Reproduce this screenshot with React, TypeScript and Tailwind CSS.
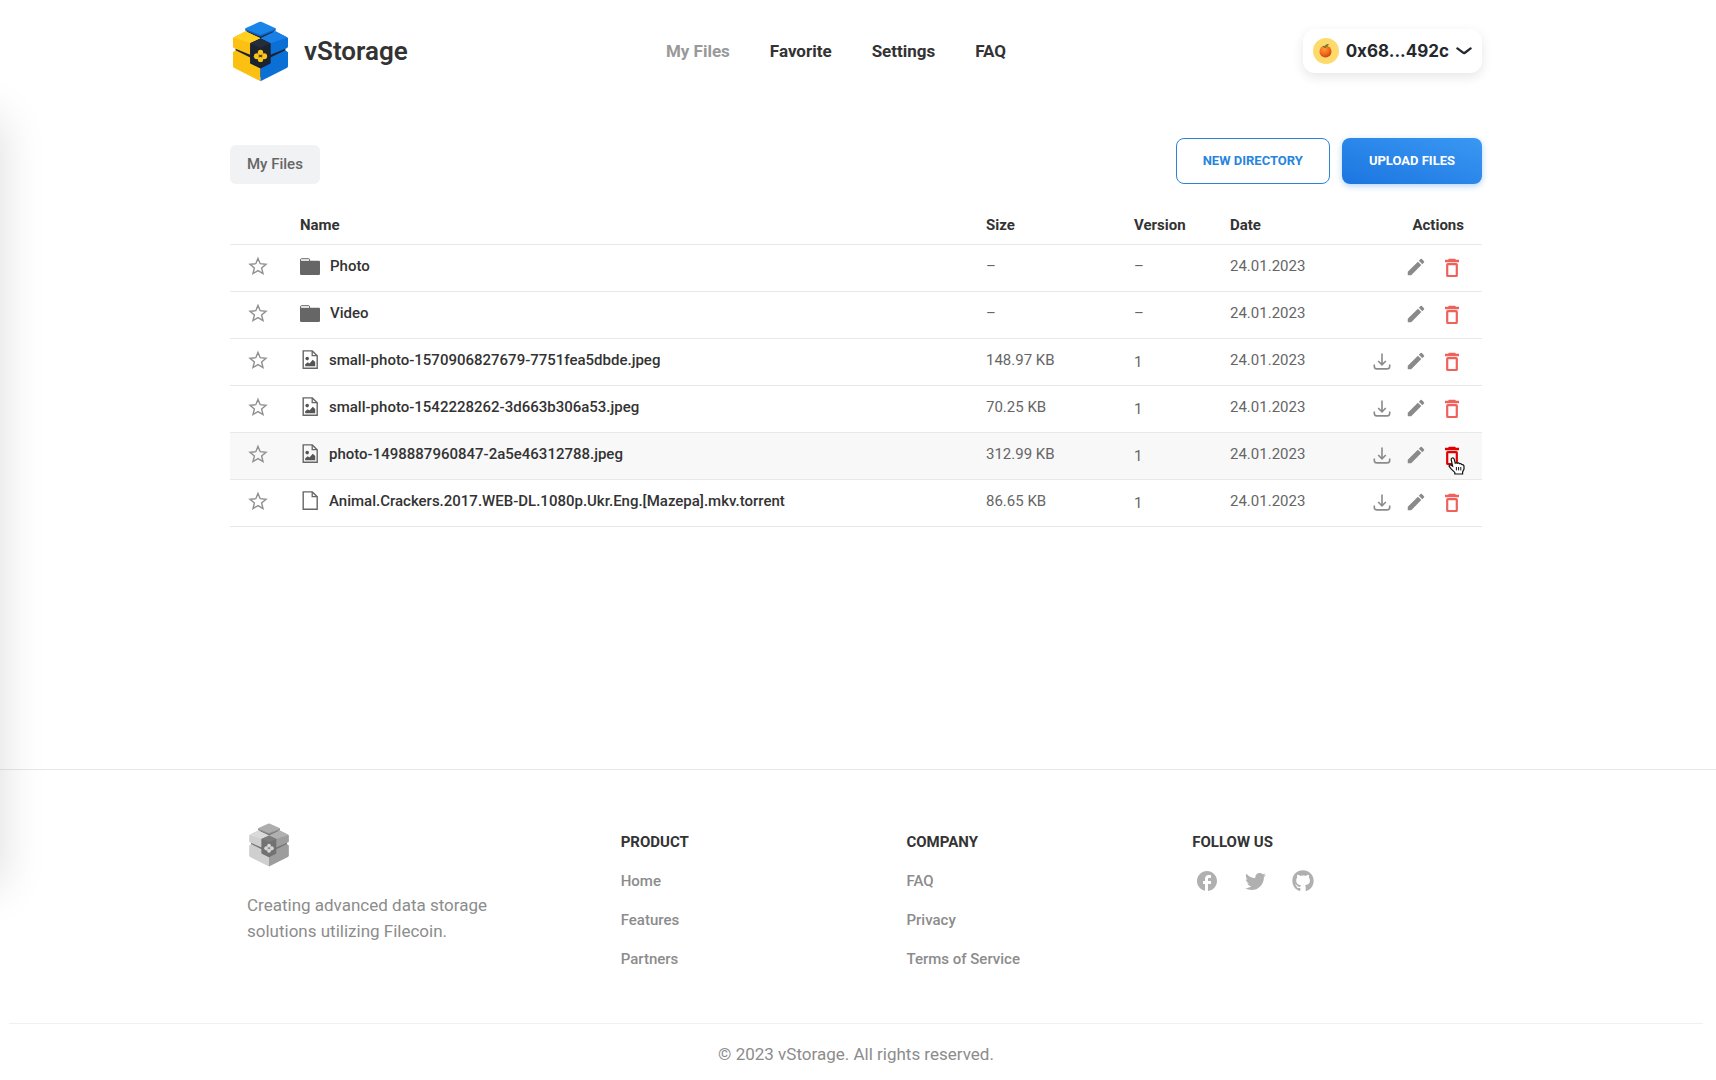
import { MdEdit, MdFacebook } from "react-icons/md";
import { FaGithub, FaTwitter } from "react-icons/fa";

type FileKind = "folder" | "image" | "file";

type FileRow = {
  name: string;
  kind: FileKind;
  size: string;
  version: string;
  date: string;
  active?: boolean;
};

const files: FileRow[] = [
  { name: "Photo", kind: "folder", size: "–", version: "–", date: "24.01.2023" },
  { name: "Video", kind: "folder", size: "–", version: "–", date: "24.01.2023" },
  { name: "small-photo-1570906827679-7751fea5dbde.jpeg", kind: "image", size: "148.97 KB", version: "1", date: "24.01.2023" },
  { name: "small-photo-1542228262-3d663b306a53.jpeg", kind: "image", size: "70.25 KB", version: "1", date: "24.01.2023" },
  { name: "photo-1498887960847-2a5e46312788.jpeg", kind: "image", size: "312.99 KB", version: "1", date: "24.01.2023", active: true },
  { name: "Animal.Crackers.2017.WEB-DL.1080p.Ukr.Eng.[Mazepa].mkv.torrent", kind: "file", size: "86.65 KB", version: "1", date: "24.01.2023" },
];

const navLinks = ["My Files", "Favorite", "Settings", "FAQ"];

const footerColumns = [
  { title: "PRODUCT", links: ["Home", "Features", "Partners"] },
  { title: "COMPANY", links: ["FAQ", "Privacy", "Terms of Service"] },
];

const colorPalette = {
  lid: "#1a84e8",
  lidEdge: "#0c62bd",
  leftTop: "#ffd021",
  left: "#fcc012",
  rightTop: "#1a80e6",
  right: "#0b70d6",
  core: "#1b2330",
  coreTop: "#252d3a",
  flower: "#fcc419",
};

const grayPalette = {
  lid: "#adadad",
  lidEdge: "#8f8f8f",
  leftTop: "#dadada",
  left: "#cfcfcf",
  rightTop: "#b0b0b0",
  right: "#9d9d9d",
  core: "#727272",
  coreTop: "#7c7c7c",
  flower: "#d8d8d8",
};

const Logo = ({ palette, className }: { palette: typeof colorPalette; className: string }) => (
  <svg viewBox="36 31 170 184" className={className} aria-hidden="true">
    <path d="M46 78 121 44 196 78V166L121 200 46 166Z" fill={palette.core} />
    {/* lower half */}
    <path d="M38 125 46 119 90 141V159L121 174V213L42 173Q38 171 38 167Z" fill={palette.left} />
    <path d="M204 125 196 119 151 141V159L121 174V213L200 173Q204 171 204 167Z" fill={palette.right} />
    {/* upper half */}
    <path d="M38 82 76 62 121 83 90 98V133L42 113Q38 111 38 107Z" fill={palette.left} />
    <path d="M39 81 76 62 121 83 90 98Z" fill={palette.leftTop} />
    <path d="M204 82 166 62 121 83 151 98V133L200 113Q204 111 204 107Z" fill={palette.right} />
    <path d="M203 81 166 62 121 83 151 98Z" fill={palette.rightTop} />
    {/* lid */}
    <path d="M75 54H167V60L125 77Q121 79 117 77L75 60Z" fill={palette.lidEdge} />
    <path d="M77 52 117 34Q121 32 125 34L165 52Q169 54 165 56L125 72Q121 74 117 72L77 56Q73 54 77 52Z" fill={palette.lid} />
    {/* core */}
    <path d="M90 98 121 84 151 98V158L121 173 90 158Z" fill={palette.core} />
    <path d="M90 98 121 84 151 98 121 112Z" fill={palette.coreTop} />
    <g fill={palette.flower}>
      <circle cx="121" cy="126" r="8" />
      <circle cx="110" cy="137" r="9" />
      <circle cx="132" cy="137" r="9" />
      <circle cx="121" cy="147" r="8" />
    </g>
    <path d="M117 132v9M125 132v9M117 137h8" stroke={palette.core} strokeWidth="2" fill="none" />
  </svg>
);

const Tangerine = () => (
  <svg viewBox="0 0 26 26" className="size-[26px]" aria-hidden="true">
    <defs>
      <radialGradient id="peel" cx="0.4" cy="0.3" r="0.75">
        <stop offset="0" stopColor="#ff9a3c" />
        <stop offset="0.55" stopColor="#f26a1b" />
        <stop offset="1" stopColor="#c93a0c" />
      </radialGradient>
    </defs>
    <circle cx="13" cy="13" r="13" fill="#fdda6b" />
    <circle cx="12.5" cy="13.6" r="6" fill="url(#peel)" />
    <path d="M11.5 8.8Q12.5 5.4 16 6.2Q15 9 11.5 8.8Z" fill="#5f8a2b" />
    <path d="M9.8 8.2 12 9.4 13.4 8.6" stroke="#4c6b22" strokeWidth="1" fill="none" />
  </svg>
);

const StarIcon = () => (
  <svg viewBox="0 0 20 20" className="size-5" fill="none" stroke="#8f8f8f" strokeWidth="1.4" strokeLinejoin="miter" aria-hidden="true">
    <path d="M10 2.4 12.2 7.7 18 8.2 13.6 11.9 15 17.6 10 14.6 5 17.6 6.4 11.9 2 8.2 7.8 7.7Z" />
  </svg>
);

const DownloadIcon = () => (
  <svg viewBox="0 0 18 18" className="size-[18px]" fill="none" stroke="currentColor" strokeWidth="1.6" aria-hidden="true">
    <path d="M9 .6V11.6M5.2 8 9 11.8 12.8 8" />
    <path d="M1.3 11.4V13.2Q1.3 15.9 4 15.9H14Q16.7 15.9 16.7 13.2V11.4" />
  </svg>
);

const TrashIcon = () => (
  <svg viewBox="0 0 24 24" className="size-6" aria-hidden="true">
    <path d="M9 2.8H15L16 3.8H19V6.2H5V3.8H8Z" fill="currentColor" />
    <rect x="7.2" y="8.2" width="9.6" height="11.8" rx="0.6" fill="none" stroke="currentColor" strokeWidth="2.2" />
  </svg>
);

const KindIcon = ({ kind }: { kind: FileKind }) => {
  if (kind === "folder") {
    return (
      <svg viewBox="0 0 20 18" className="h-[18px] w-5" aria-hidden="true">
        <path d="M.5 3.5V1.8Q.5.7 1.6.7H8.8Q9.6.7 9.6 1.8V3.4" fill="#f4f4f4" stroke="#666" />
        <path d="M0 2.8H19Q20 2.8 20 3.8V15.8Q20 17 18.8 17H1.2Q0 17 0 15.8Z" fill="#666" />
        <path d="M1.3 1.5H8.8V2.8H1.3Z" fill="#e4e4e4" />
      </svg>
    );
  }
  return (
    <svg viewBox="0 0 18 20" className="h-5 w-[18px]" aria-hidden="true">
      <path d="M2.2 .9H11.3L16.2 5.7V18.3H2.2Z" fill="none" stroke="#666" strokeWidth="1.4" />
      <path d="M11.2 .9V5.7H16.2" fill="none" stroke="#666" strokeWidth="1.3" />
      {kind === "image" && (
        <g fill="#555">
          <circle cx="6.2" cy="8.6" r="1.8" />
          <path d="M4.2 16.2V14.2L6.8 12.2 8.4 13.4 11.8 9.8 14.2 12V16.2Z" />
        </g>
      )}
    </svg>
  );
};

const HandCursor = () => (
  <svg viewBox="0 0 17 18" className="pointer-events-none absolute top-[13px] left-2 z-10 h-[18px] w-[17px]" aria-hidden="true">
    <path
      d="M4.3 1Q5.8.8 6.2 2.2L7.2 6.2Q8 5.4 9.3 6.2Q10.6 5.4 11.6 6.7Q13.4 6.2 14 7.7Q15.8 7.4 16 9.4V12L14.6 15V17H6.8V15.4L3.4 12.2 1.2 9.5Q.8 7.8 2.8 8L4.6 9.2 3.2 2.6Q3 1.3 4.3 1Z"
      fill="#fff"
      stroke="#111"
      strokeWidth="1.2"
    />
    <path d="M8.4 10V13.4M10.6 10V13.4M12.8 10V13.4" stroke="#111" fill="none" />
  </svg>
);

const FileTableRow = ({ file }: { file: FileRow }) => (
  <tr className={file.active ? "h-[47px] border-b border-[#e8e8e8] bg-[#f8f8f8]" : "h-[47px] border-b border-[#e8e8e8]"}>
    <td className="pb-[3px] pl-[18px]">
      <button type="button" aria-label={`Add ${file.name} to favorites`} className="block">
        <StarIcon />
      </button>
    </td>
    <td className="px-4">
      <div className="flex items-center gap-[10px] pb-[2px] font-medium text-[#333]">
        {file.kind === "folder" ? (
          <KindIcon kind={file.kind} />
        ) : (
          <span className="ml-px pb-[2px]">
            <KindIcon kind={file.kind} />
          </span>
        )}
        <a href="#" className="truncate">{file.name}</a>
      </div>
    </td>
    <td className="px-4 pb-[2px]">{file.size}</td>
    <td className={file.version === "1" ? "px-4 pt-[2px]" : "px-4 pb-[2px]"}>{file.version}</td>
    <td className="px-4 pb-[2px]">{file.date}</td>
    <td className="pr-[18px]">
      <div className="flex items-center justify-end gap-[13px] text-[#8a8a8a]">
        {file.kind !== "folder" && (
          <button type="button" aria-label={`Download ${file.name}`} className="mr-px">
            <DownloadIcon />
          </button>
        )}
        <button type="button" aria-label={`Rename ${file.name}`} className="pb-[2px]">
          <MdEdit className="size-[22px]" />
        </button>
        <button
          type="button"
          aria-label={`Delete ${file.name}`}
          className={file.active ? "relative text-[#e00000]" : "relative text-[#ef625c]"}
        >
          <TrashIcon />
          {file.active && <HandCursor />}
        </button>
      </div>
    </td>
  </tr>
);

const Header = () => (
  <header className="pr-1">
    <div className="mx-auto grid h-[102px] max-w-[1252px] grid-cols-[1fr_auto_1fr] items-center">
      <a href="#" className="flex items-center gap-[15px] pl-0.5 text-[#333]">
        <Logo palette={colorPalette} className="h-[61px] w-[57px]" />
        <span className="text-[26px] font-semibold">vStorage</span>
      </a>
      <nav className="flex gap-10 pt-0.5 pr-10 text-[17px] font-bold text-[#333]">
        {navLinks.map((label, idx) => (
          <a key={label} href="#" className={idx === 0 ? "text-[#999]" : ""}>
            {label}
          </a>
        ))}
      </nav>
      <button
        type="button"
        className="flex h-11 items-center gap-[7px] justify-self-end rounded-xl bg-white px-[10px] font-['Inter',sans-serif] text-[17px] font-bold text-[#25292e] shadow-[0_4px_12px_rgba(0,0,0,0.1)]"
      >
        <Tangerine />
        <span className="pt-0.5">0x68...492c</span>
        <svg viewBox="0 0 14 7" className="h-2 w-4" fill="none" stroke="currentColor" strokeWidth="2" strokeLinecap="round" strokeLinejoin="round" aria-hidden="true">
          <path d="M1.2 1.2 6.2 5Q7 5.6 7.8 5L12.8 1.2" />
        </svg>
      </button>
    </div>
  </header>
);

const Footer = () => (
  <footer className="border-t border-[#e8e8e8] pr-1">
    <div className="mx-auto grid max-w-[1252px] grid-cols-[374fr_286fr_286fr_286fr] pt-[53px] pr-1 pb-[53px] pl-[17px]">
      <div className="text-[#8c8c8c]">
        <Logo palette={grayPalette} className="ml-px h-[44px] w-[42px]" />
        <p className="mt-[25px] max-w-[270px] text-[17px] leading-[26px]">
          Creating advanced data storage solutions utilizing Filecoin.
        </p>
      </div>
      {footerColumns.map((column) => (
        <div key={column.title} className="pt-[9px] leading-[21px]">
          <h2 className="font-bold text-[#333]">{column.title}</h2>
          <ul className="mt-[18px] flex flex-col gap-[18px] font-medium text-[#8c8c8c]">
            {column.links.map((link) => (
              <li key={link}>
                <a href="#">{link}</a>
              </li>
            ))}
          </ul>
        </div>
      ))}
      <div className="pt-[9px] leading-[21px]">
        <h2 className="font-bold text-[#333]">FOLLOW US</h2>
        <div className="mt-[16px] flex gap-6 pl-[3px] text-[#b0b0b0]">
          <a href="#" aria-label="Facebook">
            <MdFacebook className="size-6" />
          </a>
          <a href="#" aria-label="Twitter" className="flex size-6 items-center justify-center">
            <FaTwitter className="size-[21px]" />
          </a>
          <a href="#" aria-label="GitHub" className="flex size-6 items-center justify-center">
            <FaGithub className="size-[22px]" />
          </a>
        </div>
      </div>
    </div>
    <div className="mx-[9px] border-t border-[#f0f0f0] pt-[17px] pb-[13px] text-center text-[17px] leading-[26px] text-[#8c8c8c]">
      © 2023 vStorage. All rights reserved.
    </div>
  </footer>
);

export default function App() {
  return (
    <div className="relative flex min-h-screen flex-col overflow-hidden bg-white font-['Roboto',sans-serif] text-[15px] text-[#666]">
      <div className="pointer-events-none absolute top-[118px] -left-[240px] h-[768px] w-[240px] shadow-[0_0_44px_rgba(0,0,0,0.14)]" />

      <Header />

      <main className="flex-1 pr-1">
        <div className="mx-auto max-w-[1252px] pt-9">
          <div className="flex items-end justify-between">
            <a href="#" className="rounded-md bg-[#f1f2f4] px-[17px] py-2 leading-[23px] font-medium">
              My Files
            </a>
            <div className="flex gap-3 text-[13px] font-bold">
              <button type="button" className="h-[46px] rounded-lg border border-[#2a84d6] px-[26px] text-[#2785e0]">
                NEW DIRECTORY
              </button>
              <button
                type="button"
                className="h-[46px] rounded-lg bg-linear-to-tr from-[#1b75e0] to-[#3a98f3] px-[27px] text-white shadow-[0_2px_6px_rgba(33,130,235,0.35)]"
              >
                UPLOAD FILES
              </button>
            </div>
          </div>

          <table className="mt-[13px] w-full table-fixed border-collapse text-left">
            <colgroup>
              <col className="w-[54px]" />
              <col />
              <col className="w-[148px]" />
              <col className="w-[96px]" />
              <col className="w-[126px]" />
              <col className="w-[142px]" />
            </colgroup>
            <thead>
              <tr className="h-[47px] border-b border-[#e8e8e8] text-[#333]">
                <th aria-label="Favorite" />
                <th className="px-4 pt-[10px] font-bold">Name</th>
                <th className="px-4 pt-[10px] font-bold">Size</th>
                <th className="px-4 pt-[10px] font-bold">Version</th>
                <th className="px-4 pt-[10px] font-bold">Date</th>
                <th className="pt-[10px] pr-[18px] text-right font-bold">Actions</th>
              </tr>
            </thead>
            <tbody>
              {files.map((file) => (
                <FileTableRow key={file.name} file={file} />
              ))}
            </tbody>
          </table>
        </div>
      </main>

      <Footer />
    </div>
  );
}
